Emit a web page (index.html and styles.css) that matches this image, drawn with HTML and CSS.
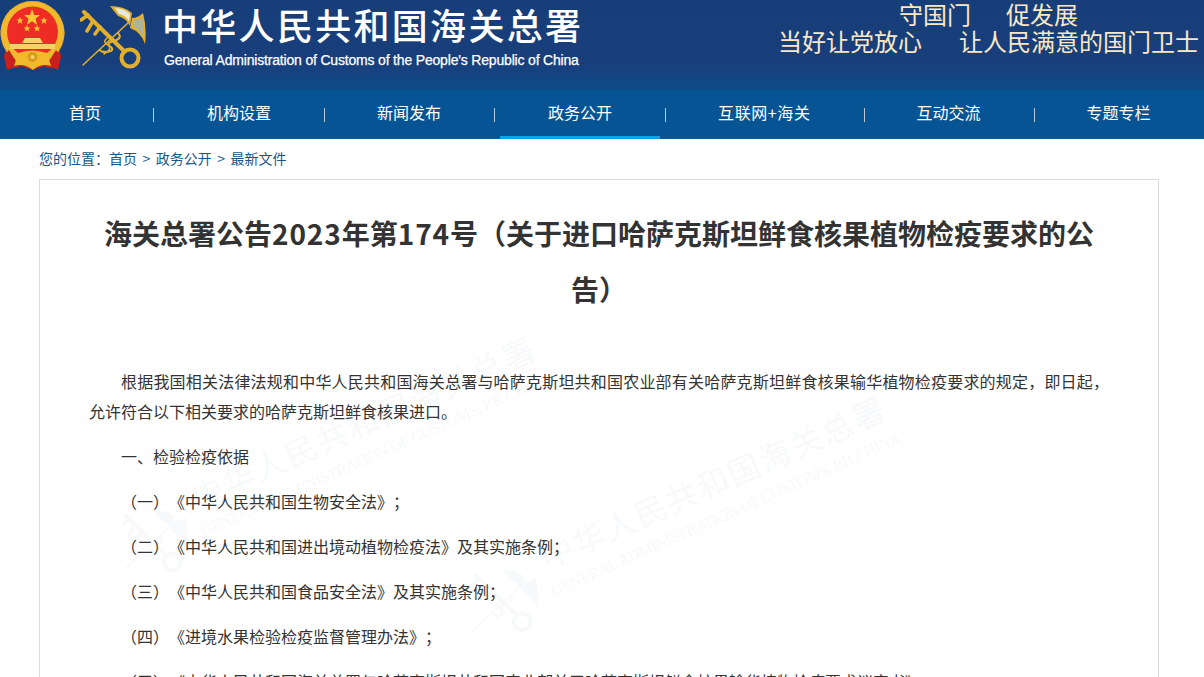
FILE: index.html
```html
<!DOCTYPE html>
<html lang="zh-CN">
<head>
<meta charset="utf-8">
<title>海关总署公告2023年第174号</title>
<link rel="stylesheet" href="styles.css">
</head>
<body>
<header class="masthead">
  <div class="brand">
    <svg class="emblem" viewBox="0 0 66 72" aria-hidden="true">
      <path d="M7 46 L4 56 L7 69 L21 66 L33 70 L45 66 L58 69 L61 56 L58 46 Z" fill="#c8201c"/>
      <circle cx="32.500" cy="33" r="32" fill="#f2b92d"/>
      <circle cx="32.500" cy="33" r="31.500" fill="none" stroke="#d9982a" stroke-width="1" stroke-dasharray="2 2"/>
      <circle cx="32.500" cy="32" r="25.500" fill="#ee2b24"/>
      <path d="M9 50 L4 56 L7 69 L20 67 L14 58 Z M56 50 L61 56 L58 69 L45 67 L51 58 Z" fill="#c8201c"/>
      <polygon points="32,9 34.200,15 40,15 35.500,18.800 37.200,25 32,21.300 26.800,25 28.500,18.800 24,15 30,15" fill="#f6c834"/>
      <polygon points="20,17 21,19.500 23.500,19.500 21.500,21 22.300,24 20,22.300 17.700,24 18.500,21 16.500,19.500 19,19.500" fill="#f6c834"/>
      <polygon points="44,17 45,19.500 47.500,19.500 45.500,21 46.300,24 44,22.300 41.700,24 42.500,21 40.500,19.500 43,19.500" fill="#f6c834"/>
      <polygon points="27,25 28,27.500 30.500,27.500 28.500,29 29.300,31.500 27,30 24.700,31.500 25.500,29 23.500,27.500 26,27.500" fill="#f6c834"/>
      <polygon points="37,25 38,27.500 40.500,27.500 38.500,29 39.300,31.500 37,30 34.700,31.500 35.500,29 33.500,27.500 36,27.500" fill="#f6c834"/>
      <path d="M25 38 H40 L43 43 H22 Z M10 44 H55 V49 H10 Z" fill="#f6d168"/>
      <path d="M18 53 Q32 48 47 53 L51 66 Q41 63 33 70 Q24 63 14 66 Z" fill="#f2b92d"/>
      <circle cx="32.500" cy="57" r="5" fill="#d99a1e"/>
      <circle cx="32.500" cy="57" r="2" fill="#f6d168"/>
    </svg>
    <svg class="key" viewBox="0 0 66 72" aria-hidden="true">
      <defs>
        <g id="key-shape" fill="none" stroke-linecap="round">
          <path d="M49 22 L3 65" stroke="currentColor" stroke-width="1.500"/>
          <path d="M4 12 L44 51" stroke="currentColor" stroke-width="4"/>
          <circle cx="50" cy="58" r="8.500" stroke="currentColor" stroke-width="4"/>
          <path d="M8 15 L1 20 M13 21 L7 31 M20 27 L15 34" stroke="currentColor" stroke-width="3.500"/>
          <path d="M38 33 Q43 38 34 41 Q25 43 31 47 Q35 51 26 52 Q21 52 20 50" stroke="currentColor" stroke-width="2"/>
          <path d="M27 38 Q22 42 28 45 Q33 49 24 54" stroke="currentColor" stroke-width="1.500"/>
          <path d="M30 6 Q44 6 52 13 L50 26 Q46 18 38 16 Q34 11 30 6 Z" fill="currentColor" stroke="none"/>
          <path d="M63 13 Q67 28 65 44 Q61 32 50 28 L52 18 Q58 18 63 13 Z" fill="currentColor" stroke="none"/>
        </g>
      </defs>
      <use href="#key-shape"/>
      <path d="M35 8 Q44 8 50 14 L49 21 Q45 15 39 14 Z" fill="#e6e9e0"/>
      <path d="M62 18 Q65 28 64 38 Q60 30 53 26 L54 20 Q58 20 62 18 Z" fill="#aeb49c"/>
    </svg>
    <div class="brand-text">
      <div class="brand-cn">中华人民共和国海关总署</div>
      <div class="brand-en">General Administration of Customs of the People's Republic of China</div>
    </div>
  </div>
  <div class="slogan">
    <div class="slogan-line slogan-top"><span>守国门</span><span>促发展</span></div>
    <div class="slogan-line"><span>当好让党放心</span><span>让人民满意的国门卫士</span></div>
  </div>
</header>

<nav class="nav">
  <a class="nav-item nav-first">首页</a><i class="nav-sep"></i>
  <a class="nav-item">机构设置</a><i class="nav-sep"></i>
  <a class="nav-item">新闻发布</a><i class="nav-sep"></i>
  <a class="nav-item nav-active">政务公开</a><i class="nav-sep"></i>
  <a class="nav-item nav-wide">互联网+海关</a><i class="nav-sep"></i>
  <a class="nav-item">互动交流</a><i class="nav-sep"></i>
  <a class="nav-item">专题专栏</a>
</nav>

<div class="crumbs">您的位置：<a>首页</a><span class="crumb-sep">&gt;</span><a>政务公开</a><span class="crumb-sep">&gt;</span><a>最新文件</a></div>

<main class="card">
  <div class="mark mark-one" aria-hidden="true">
    <svg class="mark-key" viewBox="0 0 66 72"><use href="#key-shape"/></svg>
    <div class="mark-cn">中华人民共和国海关总署</div>
    <div class="mark-en">GENERAL ADMINISTRATION OF CUSTOMS, P.R.CHINA</div>
  </div>
  <div class="mark mark-two" aria-hidden="true">
    <svg class="mark-key" viewBox="0 0 66 72"><use href="#key-shape"/></svg>
    <div class="mark-cn">中华人民共和国海关总署</div>
    <div class="mark-en">GENERAL ADMINISTRATION OF CUSTOMS, P.R.CHINA</div>
  </div>
  <h1 class="title">海关总署公告<span class="title-num">2023</span>年第<span class="title-num">174</span>号（关于进口哈萨克斯坦鲜食核果植物检疫要求的公告）</h1>
  <div class="body">
    <p>根据我国相关法律法规和中华人民共和国海关总署与哈萨克斯坦共和国农业部有关哈萨克斯坦鲜食核果输华植物检疫要求的规定，即日起，允许符合以下相关要求的哈萨克斯坦鲜食核果进口。</p>
    <p>一、检验检疫依据</p>
    <p>（一）《中华人民共和国生物安全法》；</p>
    <p>（二）《中华人民共和国进出境动植物检疫法》及其实施条例；</p>
    <p>（三）《中华人民共和国食品安全法》及其实施条例；</p>
    <p>（四）《进境水果检验检疫监督管理办法》；</p>
    <p>（五）《中华人民共和国海关总署与哈萨克斯坦共和国农业部关于哈萨克斯坦鲜食核果输华植物检疫要求议定书》。</p>
  </div>
</main>
</body>
</html>
```
FILE: styles.css
```css
* { box-sizing: border-box; }
html, body { margin: 0; padding: 0; background: #fff; }
body { font-family: "Noto Sans CJK SC", "Liberation Sans", sans-serif; color: #333; height: 677px; overflow: hidden; }

.masthead { height: 90px; background: linear-gradient(#183e7a, #183f7b 70%, #0f4c8a); display: flex; justify-content: space-between; padding: 0 5px 0 0; color: #fff; }
.brand { display: flex; align-items: flex-start; }
.emblem { width: 66px; height: 72px; flex: none; }
.key { width: 66px; height: 72px; flex: none; margin-left: 14px; color: #e4b02c; }
.brand-text { margin-left: 16px; padding-top: 3px; }
.brand-cn { font-size: 36px; line-height: 42px; letter-spacing: 2.300px; font-weight: 500; white-space: nowrap; }
.brand-en { font-family: "Liberation Sans", sans-serif; font-size: 14px; line-height: 16px; margin: 7px 0 0 2px; white-space: nowrap; letter-spacing: -0.18px; -webkit-text-stroke: 0.25px #fff; }
.slogan { color: #fbe9c6; font-size: 24px; line-height: 27px; }
.slogan-line { display: flex; justify-content: center; gap: 37px; }
.slogan-top { gap: 35px; }

.nav { height: 49px; background: #075494; display: flex; align-items: stretch; padding-left: 21px; color: #fff; font-size: 16px; }
.nav-item { padding: 0 48px; line-height: 44px; white-space: nowrap; border-bottom: 3px solid transparent; }
.nav-first { padding-right: 52px; }
.nav-active { border-bottom-color: #0ea0ea; margin-left: 1px; }
.nav-wide { letter-spacing: 0.600px; }
.nav-sep { width: 1px; height: 14px; background: #b9c8d6; margin: 18px 4px 0 5px; }
.nav-first + .nav-sep { margin: 18px 5px 0 0; }

.crumbs { height: 40px; padding: 9px 0 0 39px; font-size: 14px; line-height: 20px; color: #15568d; }
.crumb-sep { margin: 0 5.500px; }

.card { position: relative; margin: 0 45px 0 39px; border: 1px solid #ddd; padding: 25px 49px 0; overflow: hidden; min-height: 520px; }
.title { font-size: 28px; line-height: 56px; font-weight: 700; text-align: center; margin: 0 0 49px; color: #333; position: relative; }
.title-num { letter-spacing: 0.900px; }
.body { position: relative; font-size: 16px; line-height: 30px; text-align: justify; text-spacing-trim: space-all; }
.body p { margin: 0 0 15px; text-indent: 32px; }

.mark { position: absolute; width: 400px; transform: rotate(-24deg); transform-origin: left top; color: #1f5a9f; opacity: 0.03; white-space: nowrap; }
.mark-one { left: 143px; top: 297px; }
.mark-two { left: 493px; top: 357px; }
.mark-key { position: absolute; left: -84px; top: 10px; width: 66px; height: 72px; transform: rotate(24deg); }
.mark-cn { font-size: 32px; line-height: 44px; letter-spacing: 2px; }
.mark-en { font-family: "Liberation Serif", serif; font-size: 16px; line-height: 24px; letter-spacing: -0.500px; margin: 2px 0 0 -5px; }
```
